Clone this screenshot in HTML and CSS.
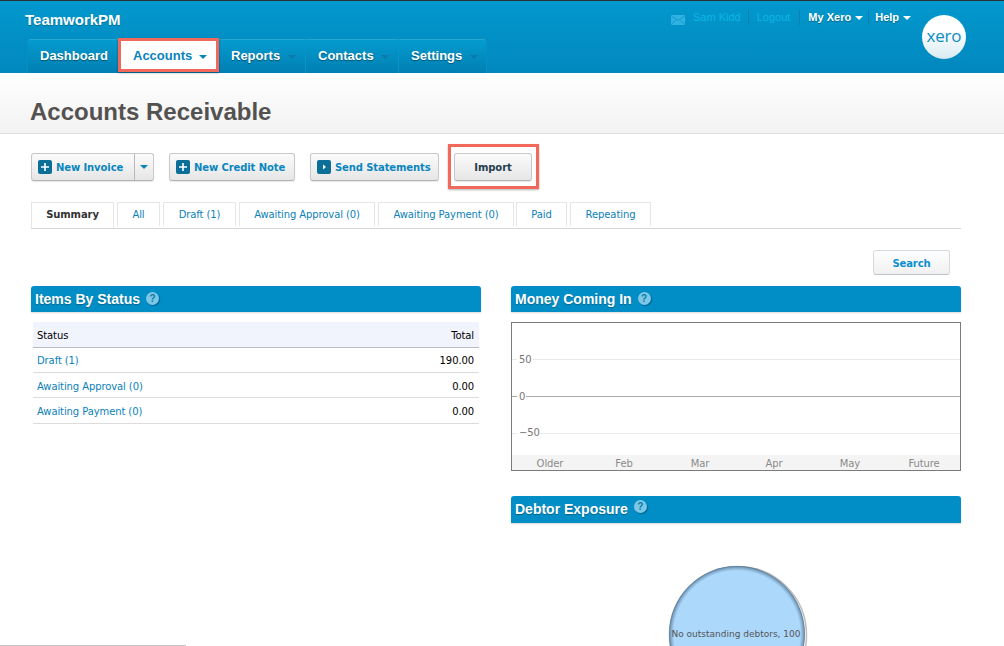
FILE: index.html
```html
<!DOCTYPE html>
<html lang="en">
<head>
    <meta charset="UTF-8">
    <meta name="viewport" content="width=device-width, initial-scale=1.0">
    <title>Accounts Receivable</title>
    <link rel="stylesheet" href="styles.css">
</head>
<body>
    <header class="topbar">
        <div class="topbar-left">
            <div class="brand">TeamworkPM</div>
            <nav class="mainnav">
                <a class="navitem nav-dash">Dashboard</a>
                <a class="navitem nav-accounts">Accounts <span class="caret caret-blue"></span></a>
                <a class="navitem nav-reports">Reports <span class="caret caret-dim"></span></a>
                <a class="navitem nav-contacts">Contacts <span class="caret caret-dim"></span></a>
                <a class="navitem nav-settings">Settings <span class="caret caret-dim"></span></a>
            </nav>
        </div>
        <div class="usernav">
            <svg class="envelope" width="14" height="10" viewBox="0 0 14 10">
                <rect width="14" height="10" rx="1" fill="#2fb2e2"/>
                <path d="M0.5 1 L7 5.5 L13.5 1 M0.5 9.5 L5 4.5 M13.5 9.5 L9 4.5" fill="none" stroke="#0b94c9" stroke-width="0.8"/>
            </svg>
            <a class="userlink link-name">Sam Kidd</a>
            <a class="userlink link-logout">Logout</a>
            <a class="usermenu menu-xero">My Xero <span class="caret caret-white"></span></a>
            <a class="usermenu menu-help">Help <span class="caret caret-white"></span></a>
        </div>
        <div class="logo">xero</div>
    </header>

    <div class="titleband">
        <h1>Accounts Receivable</h1>
    </div>

    <main class="content">
        <div class="toolbar">
            <div class="btn btn-split">
                <span class="btn-main">
                    <svg class="ico" width="14" height="14" viewBox="0 0 14 14"><rect width="14" height="14" rx="2" fill="#0b6f98"/><path d="M7 3v8M3 7h8" stroke="#fff" stroke-width="1.6"/></svg>
                    New Invoice
                </span>
                <span class="btn-drop"><span class="caret caret-blue"></span></span>
            </div>
            <div class="btn btn-credit">
                <svg class="ico" width="14" height="14" viewBox="0 0 14 14"><rect width="14" height="14" rx="2" fill="#0b6f98"/><path d="M7 3v8M3 7h8" stroke="#fff" stroke-width="1.6"/></svg>
                New Credit Note
            </div>
            <div class="btn btn-send">
                <svg class="ico" width="14" height="14" viewBox="0 0 14 14"><rect width="14" height="14" rx="2" fill="#0b6f98"/><path d="M6 4.5l3 2.5-3 2.5z" fill="#fff"/></svg>
                Send Statements
            </div>
            <div class="import-mark">
                <div class="btn btn-import">Import</div>
            </div>
        </div>

        <div class="tabs">
            <a class="tab tab-active">Summary</a>
            <a class="tab tab-all">All</a>
            <a class="tab tab-draft">Draft (1)</a>
            <a class="tab tab-approval">Awaiting Approval (0)</a>
            <a class="tab tab-payment">Awaiting Payment (0)</a>
            <a class="tab tab-paid">Paid</a>
            <a class="tab tab-repeating">Repeating</a>
        </div>

        <div class="searchrow">
            <a class="search-btn">Search</a>
        </div>

        <div class="columns">
            <section class="col">
                <h2 class="panelhead">Items By Status <span class="help">?</span></h2>
                <table class="status-table">
                    <thead>
                        <tr><th class="left">Status</th><th class="right">Total</th></tr>
                    </thead>
                    <tbody>
                        <tr><td><a>Draft (1)</a></td><td class="right">190.00</td></tr>
                        <tr><td><a>Awaiting Approval (0)</a></td><td class="right">0.00</td></tr>
                        <tr><td><a>Awaiting Payment (0)</a></td><td class="right">0.00</td></tr>
                    </tbody>
                </table>
            </section>

            <section class="col">
                <h2 class="panelhead">Money Coming In <span class="help">?</span></h2>
                <div class="chart">
                    <svg width="448" height="147" viewBox="0 0 448 147">
                        <rect x="0" y="132" width="448" height="15" fill="#f4f4f4"/>
                        <line x1="0" y1="36.5" x2="448" y2="36.5" stroke="#eaeaea"/>
                        <line x1="0" y1="73.5" x2="448" y2="73.5" stroke="#a8a8a8"/>
                        <line x1="0" y1="110.5" x2="448" y2="110.5" stroke="#eaeaea"/>
                        <rect x="5" y="28" width="16" height="16" fill="#fff"/>
                        <rect x="5" y="66" width="9" height="16" fill="#fff"/>
                        <rect x="5" y="102" width="23" height="16" fill="#fff"/>
                        <g class="chart-y">
                            <text x="7" y="39.5">50</text>
                            <text x="7" y="76.5">0</text>
                            <text x="7" y="113">−50</text>
                        </g>
                        <g class="chart-x">
                            <text x="38" y="144">Older</text>
                            <text x="112" y="144">Feb</text>
                            <text x="188" y="144">Mar</text>
                            <text x="262" y="144">Apr</text>
                            <text x="338" y="144">May</text>
                            <text x="412" y="144">Future</text>
                        </g>
                    </svg>
                </div>

                <h2 class="panelhead panelhead-debtor">Debtor Exposure <span class="help help-high">?</span></h2>
                <div class="pie">
                    <svg width="150" height="90" viewBox="0 0 150 90">
                        <defs>
                            <radialGradient id="pieEdge" cx="50%" cy="50%" r="50%">
                                <stop offset="0.93" stop-color="#acd8fc"/>
                                <stop offset="0.975" stop-color="#7fa6c6"/>
                                <stop offset="1" stop-color="#567692"/>
                            </radialGradient>
                        </defs>
                        <circle cx="76" cy="71" r="68.5" fill="none" stroke="#bdbdbd" stroke-width="1.5"/>
                        <circle cx="75" cy="70" r="68" fill="url(#pieEdge)"/>
                        <text class="pie-label" x="74" y="73">No outstanding debtors, 100</text>
                    </svg>
                </div>
            </section>
        </div>
    </main>

    <div class="statusline"></div>
</body>
</html>
```

FILE: styles.css
```css
html, body {
    margin: 0;
    padding: 0;
    height: 646px;
    overflow: hidden;
    background: #fff;
}
body {
    font-family: "DejaVu Sans", sans-serif;
    font-size: 10px;
    letter-spacing: -.1px;
    color: #000;
}
a {
    text-decoration: none;
}

/* header */
.topbar {
    height: 72px;
    border-top: 1px solid #2a3338;
    background: linear-gradient(#0298cd, #0188bf);
    display: flex;
    position: relative;
    letter-spacing: 0;
}
.topbar-left {
    padding-left: 27px;
    display: flex;
    flex-direction: column;
}
.brand {
    font: bold 15px/16px "Liberation Sans", sans-serif;
    color: #fff;
    margin: 11px 0 0 -2px;
    height: 26px;
    text-shadow: 0 1px 1px rgba(0,0,0,.25);
}
.mainnav {
    display: flex;
    height: 35px;
    background: linear-gradient(#049ccf, #017fb3);
    border: 1px solid #0a8dbf;
    border-bottom: 0;
    border-radius: 3px 3px 0 0;
    box-sizing: border-box;
    width: 460px;
    box-shadow: inset 0 1px 0 rgba(255,255,255,.12);
}
.navitem {
    font: bold 13px/33px "Liberation Sans", sans-serif;
    color: #fff;
    padding-left: 12px;
    box-sizing: border-box;
    white-space: nowrap;
    text-shadow: 0 1px 1px rgba(0,0,0,.4);
    border-left: 1px solid #0a95c9;
}
.nav-dash { width: 90px; border-left: 0; }
.nav-accounts {
    width: 101px;
    background: #fff;
    color: #0a83bb;
    border: 3px solid #f0695a;
    line-height: 30px;
    text-shadow: none;
    height: 34px;
    margin-top: -1px;
    box-shadow: 0 1px 2px rgba(0,0,0,.35);
}
.nav-accounts .caret { margin-left: 3px; }
.nav-reports { width: 86px; border-left: 0; }
.nav-contacts { width: 93px; }
.nav-settings { width: 88px; }

.caret {
    display: inline-block;
    width: 0;
    height: 0;
    margin-left: 4px;
    vertical-align: 1px;
    border-left: 4px solid transparent;
    border-right: 4px solid transparent;
    border-top: 4px solid #fff;
}
.caret-blue { border-top-color: #0a83bb; }
.caret-dim { border-top-color: #0c7aa8; }
.caret-white { margin-left: 1px; }

.usernav {
    position: absolute;
    top: 9px;
    left: 671px;
    display: flex;
    align-items: center;
    height: 15px;
    font: 11px/15px "Liberation Sans", sans-serif;
}
.envelope { margin-top: 4px; margin-right: 8px; }
.userlink { color: #0cb6e6; }
.link-name { padding-right: 7px; border-right: 1px solid #0b7fae; }
.link-logout { padding: 0 9px 0 8px; border-right: 1px solid #0b7fae; }
.usermenu {
    color: #fff;
    font-weight: bold;
    text-shadow: 0 1px 1px rgba(0,0,0,.3);
}
.menu-xero { padding: 0 5px 0 8px; border-right: 1px solid #0b7fae; }
.menu-help { padding-left: 6px; }

.logo {
    position: absolute;
    left: 922px;
    top: 14px;
    width: 44px;
    height: 44px;
    border-radius: 50%;
    background: linear-gradient(#fff 35%, #d9ebf2);
    color: #0a8ec4;
    font: 400 17px/41px "Open Sans", sans-serif;
    text-align: center;
    letter-spacing: -.2px;
}

/* title band */
.titleband {
    height: 61px;
    box-sizing: border-box;
    background: linear-gradient(#fff, #f2f2f2);
    border-bottom: 1px solid #dedede;
    padding-left: 30px;
}
.titleband h1 {
    margin: 0;
    padding-top: 25px;
    font: bold 24px/28px "Liberation Sans", sans-serif;
    letter-spacing: 0;
    color: #545250;
}

/* page body */
.content {
    padding: 19px 43px 0 31px;
}
.toolbar {
    display: flex;
    height: 28px;
    align-items: flex-start;
}
.btn {
    height: 28px;
    box-sizing: border-box;
    border: 1px solid #c8c8c8;
    border-bottom-color: #b4b4b4;
    border-radius: 3px;
    background: linear-gradient(#fbfbfb, #e6e6e6);
    font-weight: bold;
    line-height: 28px;
    color: #0a86bf;
    display: flex;
    align-items: center;
    white-space: nowrap;
    padding-top: 2px;
    box-shadow: 0 1px 1px rgba(0,0,0,.1);
}
.ico { flex: none; margin-right: 4px; margin-top: -2px; }
.btn-split { width: 123px; padding-top: 0; }
.btn-main {
    display: flex;
    align-items: center;
    width: 103px;
    padding: 2px 0 0 6px;
    height: 26px;
    box-sizing: border-box;
    border-right: 1px solid #b8b8b8;
}
.btn-drop {
    flex: 1;
    text-align: center;
    line-height: 22px;
}
.btn-drop .caret { margin-left: 0; }
.btn-credit { width: 126px; margin-left: 15px; padding-left: 6px; }
.btn-send { width: 129px; margin-left: 15px; padding-left: 6px; }
.import-mark {
    margin: -9px 0 0 9px;
    padding: 6px 4px 5px 3px;
    border: 3px solid #f0695a;
    box-shadow: 0 1px 2px rgba(0,0,0,.3);
    background: #fff;
}
.btn-import {
    width: 78px;
    justify-content: center;
    color: #263d4c;
}

.tabs {
    display: flex;
    gap: 3px;
    height: 27px;
    margin-top: 21px;
    box-sizing: border-box;
    border-bottom: 1px solid #d6d6d6;
    width: 930px;
}
.tab {
    height: 24px;
    box-sizing: border-box;
    border: 1px solid #e6e6e6;
    border-bottom: 0;
    color: #0a7fb8;
    line-height: 23px;
    text-align: center;
    white-space: nowrap;
}
.tab-active {
    width: 83px;
    color: #333;
    font-weight: bold;
    height: 26px;
    background: #fff;
}
.tab-all { width: 43px; }
.tab-draft { width: 73px; }
.tab-approval { width: 136px; }
.tab-payment { width: 136px; }
.tab-paid { width: 51px; margin-left: -1px; }
.tab-repeating { width: 81px; }

.searchrow {
    display: flex;
    justify-content: flex-end;
    padding-right: 11px;
    margin-top: 21px;
}
.search-btn {
    width: 77px;
    height: 25px;
    box-sizing: border-box;
    border: 1px solid #d4dce2;
    border-bottom-color: #bcc4ca;
    border-radius: 3px;
    background: linear-gradient(#fff, #f0f0f0);
    color: #0a8fd0;
    font-weight: bold;
    line-height: 25px;
    text-align: center;
}

.columns {
    display: grid;
    grid-template-columns: 450px 450px;
    gap: 30px;
    margin-top: 11px;
}
.panelhead {
    margin: 0;
    height: 26px;
    padding-left: 4px;
    background: #018ec6;
    border-radius: 3px 3px 0 0;
    box-shadow: 0 1px 2px rgba(0,0,0,.15);
    color: #fff;
    font: bold 14px/26px "Liberation Sans", sans-serif;
    letter-spacing: 0;
    text-shadow: 0 1px 1px rgba(0,0,0,.3);
}
.help {
    display: inline-block;
    width: 13px;
    height: 13px;
    margin-left: 2px;
    vertical-align: 2px;
    border-radius: 50%;
    background: #7cc8e6;
    color: #0d7aa8;
    font: bold 10px/13px "Liberation Sans", sans-serif;
    text-align: center;
    text-shadow: none;
    box-shadow: 1px 1px 1px rgba(0,60,90,.5);
}
.help-high { vertical-align: 4px; }

.status-table {
    width: 446px;
    margin: 10px 0 0 2px;
    border-collapse: collapse;
}
.status-table th {
    height: 24px;
    padding: 1px 5px 0 4px;
    background: #f2f4fd;
    border-bottom: 1px solid #b8bcc9;
    font-weight: normal;
    color: #000;
}
.status-table td {
    height: 24px;
    padding: 0 5px 0 4px;
    border-bottom: 1px solid #dcdcdc;
}
.status-table tr + tr td {
    padding-top: 2px;
    height: 22px;
}
.status-table tr:last-child td { padding-top: 1px; height: 24px; }
.status-table td a { color: #0a7fb8; }
.left { text-align: left; }
.status-table .right { text-align: right; }

.chart {
    margin-top: 10px;
    height: 149px;
    box-sizing: border-box;
    border: 1px solid #7b7b7b;
}
.chart svg { display: block; }
.chart-y text {
    font-size: 10px;
    fill: #777;
    font-family: "DejaVu Sans", sans-serif;
}
.chart-x text {
    font-size: 10px;
    fill: #8a8a8a;
    text-anchor: middle;
    font-family: "DejaVu Sans", sans-serif;
}

.panelhead-debtor {
    margin-top: 25px;
    height: 27px;
}
.pie {
    display: flex;
    justify-content: center;
    margin-top: 41px;
    height: 82px;
    overflow: hidden;
}
.pie svg { display: block; margin-left: 1px; }
.pie-label {
    font-size: 9px;
    letter-spacing: 0;
    fill: #555;
    text-anchor: middle;
    font-family: "DejaVu Sans", sans-serif;
}

.statusline {
    position: fixed;
    left: 0;
    bottom: 0;
    width: 186px;
    height: 1px;
    background: #c4c4c4;
}
```
